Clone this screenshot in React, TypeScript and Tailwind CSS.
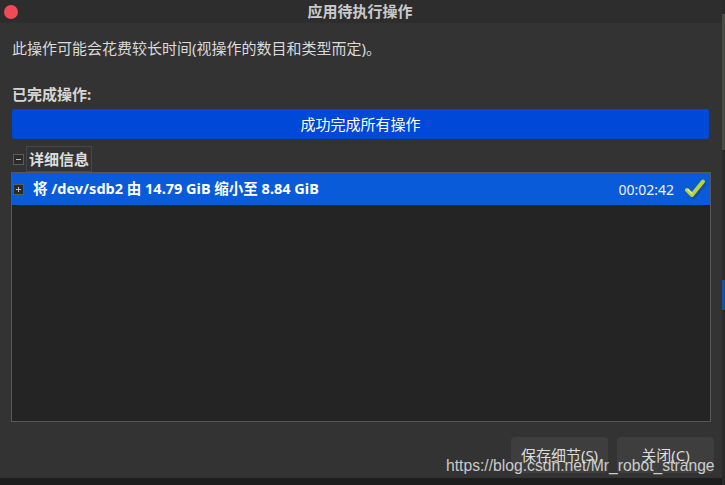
const cjk = '"Noto Sans", "Noto Sans CJK SC", sans-serif'

function CheckMark() {
  return (
    <svg width="22" height="22" viewBox="0 0 22 22">
      <path d="M3 12.5 L8 17.5 L19 4" fill="none" stroke="#1f3f7a" strokeOpacity="0.5" strokeWidth="4.5" strokeLinecap="round" strokeLinejoin="round" transform="translate(1.5 1.5)" />
      <path d="M3 12 L8 17 L19 3.5" fill="none" stroke="#b9d33a" strokeWidth="4" strokeLinecap="round" strokeLinejoin="round" />
      <path d="M4 11.5 L8 15.5" fill="none" stroke="#e3f08a" strokeWidth="1.2" strokeLinecap="round" />
    </svg>
  )
}

function ExpanderBox({ sign }: { sign: '+' | '-' }) {
  return (
    <span className="relative flex h-[11px] w-[11px] items-center justify-center border border-[#5c5c5c] bg-[#2b2b2b]">
      <span className="h-px w-[5px] bg-[#bdbdbd]" />
      {sign === '+' && <span className="absolute h-[5px] w-px bg-[#bdbdbd]" />}
    </span>
  )
}

export default function App() {
  return (
    <div className="relative flex h-[485px] w-[725px] overflow-hidden bg-[#1d1d1d]" style={{ fontFamily: cjk }}>
      <div className="flex h-[478px] w-[722px] flex-col bg-[#333333]">
        {/* title bar */}
        <div className="flex h-[23px] items-center bg-[#2d2d2d]">
          <div className="flex flex-1 pl-[4px]">
            <span className="h-[14px] w-[14px] rounded-full bg-[#ee4b55]" />
          </div>
          <span className="pr-[6px] text-[15px] font-bold leading-none text-[#cacaca]">应用待执行操作</span>
          <div className="flex-1" />
        </div>

        <div className="flex flex-1 flex-col">
          <p className="mt-[15px] pl-[12px] text-[15px] leading-[20px] text-[#dadada]">
            此操作可能会花费较长时间(视操作的数目和类型而定)。
          </p>

          <p className="mt-[26px] pl-[12px] text-[15px] font-bold leading-[20px] text-[#d6d6d6]">已完成操作:</p>

          <div className="ml-[12px] mt-[5px] flex h-[30px] w-[697px] items-center justify-center rounded-[3px] bg-[#0048d8] text-[15px] text-white">
            成功完成所有操作
          </div>

          <div className="ml-[13px] mt-[7px] flex h-[26px] items-center gap-[2px]">
            <ExpanderBox sign="-" />
            <span className="flex h-[26px] items-center border border-[#474747] px-[2px] text-[15px] font-bold text-[#dedede]">
              详细信息
            </span>
          </div>

          <div className="ml-[11px] flex h-[250px] w-[700px] flex-col border border-[#575757] bg-[#242424]">
            <div className="flex h-[32px] items-center bg-[#0a5bd9] pl-[1px] pr-[4px] text-white">
              <ExpanderBox sign="+" />
              <span className="ml-[9px] text-[14.5px] font-bold">将 /dev/sdb2 由 14.79 GiB 缩小至 8.84 GiB</span>
              <span className="ml-auto text-[14px] text-[#f0f0f0]">00:02:42</span>
              <span className="ml-[10px] flex">
                <CheckMark />
              </span>
            </div>
          </div>

          <div className="mr-[8px] mt-[15px] flex justify-end gap-[9px]">
            <button className="h-[36px] w-[97px] rounded-[4px] bg-[#3e3e3e] text-[15px] text-[#dcdcdc]">保存细节(S)</button>
            <button className="h-[36px] w-[97px] rounded-[4px] bg-[#3e3e3e] text-[15px] text-[#dcdcdc]">关闭(C)</button>
          </div>
        </div>
      </div>

      <div className="flex w-[3px] flex-col bg-[#2a2a2a]">
        <div className="mt-[14px] h-[136px] bg-[#4a4a45]" />
        <div className="mt-[130px] h-[30px] bg-[#1c4f9e]" />
      </div>

      <span
        className="absolute left-[446px] top-[455px] text-[15.7px] leading-[22px] text-[#e6e6e6]/85"
        style={{ fontFamily: '"Liberation Sans", Arial, sans-serif' }}
      >
        https://blog.csdn.net/Mr_robot_strange
      </span>
    </div>
  )
}
